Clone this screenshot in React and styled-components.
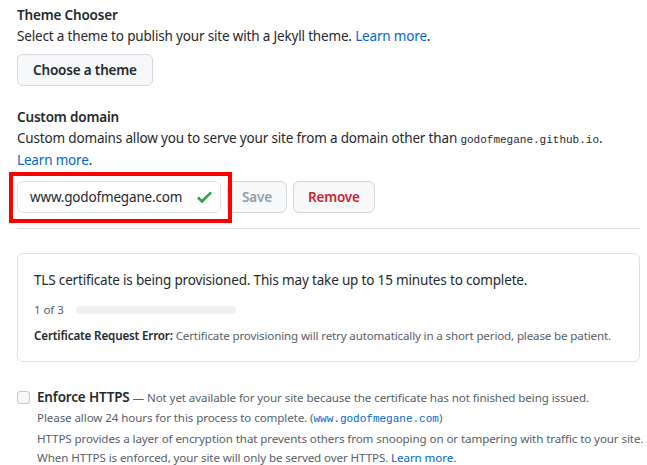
import React from 'react';
import styled, { createGlobalStyle } from 'styled-components';

const GlobalStyle = createGlobalStyle`
    body {
        margin: 0;
        background: #fff;
        font-family: "Segoe UI", "Noto Sans", sans-serif;
        color: #24292e;
        font-size: 13.5px;
        letter-spacing: -0.17px;
    }
`;

export default function App() {
    return (
        <>
            <GlobalStyle />
            <Page>
                <Section>
                    <Title>Theme Chooser</Title>
                    <Text>Select a theme to publish your site with a Jekyll theme. <Link href="#">Learn more</Link>.</Text>
                    <Button>Choose a theme</Button>
                </Section>

                <Section>
                    <Title>Custom domain</Title>
                    <Text>
                        Custom domains allow you to serve your site from a domain other than <Code>godofmegane.github.io</Code>.<br />
                        <Link href="#">Learn more</Link>.
                    </Text>
                    <DomainRow>
                        <Highlight>
                            <Input>
                                <span>www.godofmegane.com</span>
                                <svg width="15" height="20" viewBox="0 0 12 16">
                                    <path fill="#28a745" d="M12 5l-8 8-4-4 1.5-1.5L4 10l6.5-6.5L12 5z" />
                                </svg>
                            </Input>
                        </Highlight>
                        <Button $muted>Save</Button>
                        <Button $danger>Remove</Button>
                    </DomainRow>
                </Section>

                <Divider />

                <StatusBox>
                    <p className='lead'>TLS certificate is being provisioned. This may take up to 15 minutes to complete.</p>
                    <Progress>
                        <span>1 of 3</span>
                        <Track />
                    </Progress>
                    <p className='note'><strong>Certificate Request Error:</strong> Certificate provisioning will retry automatically in a short period, please be patient.</p>
                </StatusBox>

                <Enforce>
                    <Checkbox />
                    <div>
                        <p className='head'>
                            <strong>Enforce HTTPS</strong> — Not yet available for your site because the certificate has not finished being issued.
                        </p>
                        <p>Please allow 24 hours for this process to complete. (<SmallCode>www.godofmegane.com</SmallCode>)</p>
                        <p>HTTPS provides a layer of encryption that prevents others from snooping on or tampering with traffic to your site.</p>
                        <p>When HTTPS is enforced, your site will only be served over HTTPS. <Link href="#">Learn more</Link>.</p>
                    </div>
                </Enforce>
            </Page>
        </>
    );
}

const Page = styled.main`
    width: 623px;
    padding: 5px 0 0 17px;
`;

const Section = styled.section`
    margin-bottom: 21px;
`;

const Title = styled.h3`
    margin: 0;
    font-size: 13.5px;
    font-weight: 600;
    line-height: 21px;
`;

const Text = styled.p`
    margin: 0;
    line-height: 20px;
`;

const Link = styled.a`
    color: #0366d6;
    text-decoration: none;
`;

const Code = styled.code`
    font-family: "Liberation Mono", monospace;
    font-size: 11px;
    letter-spacing: 0;
`;

const SmallCode = styled(Code)`
    color: #0366d6;
`;

const Button = styled.button`
    margin-top: 8px;
    height: 32px;
    padding: 0 15px;
    font-family: inherit;
    font-size: 13.5px;
    letter-spacing: -0.17px;
    font-weight: 600;
    color: ${p => (p.$danger ? '#cb2431' : p.$muted ? '#959da5' : '#24292e')};
    background: #f6f8fa;
    border: 1px solid #d5d8dc;
    border-radius: 6px;
`;

const DomainRow = styled.div`
    display: flex;
    align-items: center;
    gap: 6px;
    margin-top: 11px;

    ${Button} {
        margin-top: 0;
        padding: 0 14px;
    }
`;

const Highlight = styled.div`
    position: relative;

    &::after {
        content: '';
        position: absolute;
        left: -8px;
        top: -9px;
        right: -11px;
        bottom: -10px;
        border: 4px solid #f00;
    }
`;

const Input = styled.div`
    width: 204px;
    height: 32px;
    box-sizing: border-box;
    display: flex;
    align-items: center;
    justify-content: space-between;
    padding: 0 8px 0 12px;
    border: 1px solid #e1e4e8;
    border-radius: 6px;
`;

const Divider = styled.hr`
    margin: -6px 0 24px;
    border: 0;
    border-top: 1px solid #e1e4e8;
`;

const StatusBox = styled.div`
    border: 1px solid #dfe2e5;
    border-radius: 6px;
    padding: 16px 16px 16px;

    p {
        margin: 0;
    }

    .lead {
        line-height: 21px;
    }

    .note {
        font-size: 11.6px;
        letter-spacing: -0.15px;
        line-height: 18px;
        color: #586069;

        strong {
            color: #24292e;
            font-weight: 600;
        }
    }
`;

const Progress = styled.div`
    display: flex;
    align-items: center;
    gap: 12px;
    margin: 10px 0 8px;
    font-size: 11.6px;
    letter-spacing: -0.1px;
    line-height: 18px;
    color: #586069;
`;

const Track = styled.div`
    width: 160px;
    height: 8px;
    border-radius: 4px;
    background: #eff0f2;
`;

const Enforce = styled.div`
    display: flex;
    gap: 7px;
    margin-top: 25px;

    p {
        margin: 0;
        font-size: 11.6px;
        letter-spacing: -0.1px;
        line-height: 19px;
        color: #586069;
        white-space: nowrap;
    }

    .head {
        line-height: 21px;
    }

    strong {
        font-size: 13.5px;
        letter-spacing: -0.17px;
        font-weight: 600;
        color: #24292e;
    }
`;

const Checkbox = styled.span`
    flex: none;
    width: 13px;
    height: 13px;
    margin-top: 4px;
    box-sizing: border-box;
    border: 1px solid #c4c7cb;
    border-radius: 3px;
    background: #f7f7f7;
`;
